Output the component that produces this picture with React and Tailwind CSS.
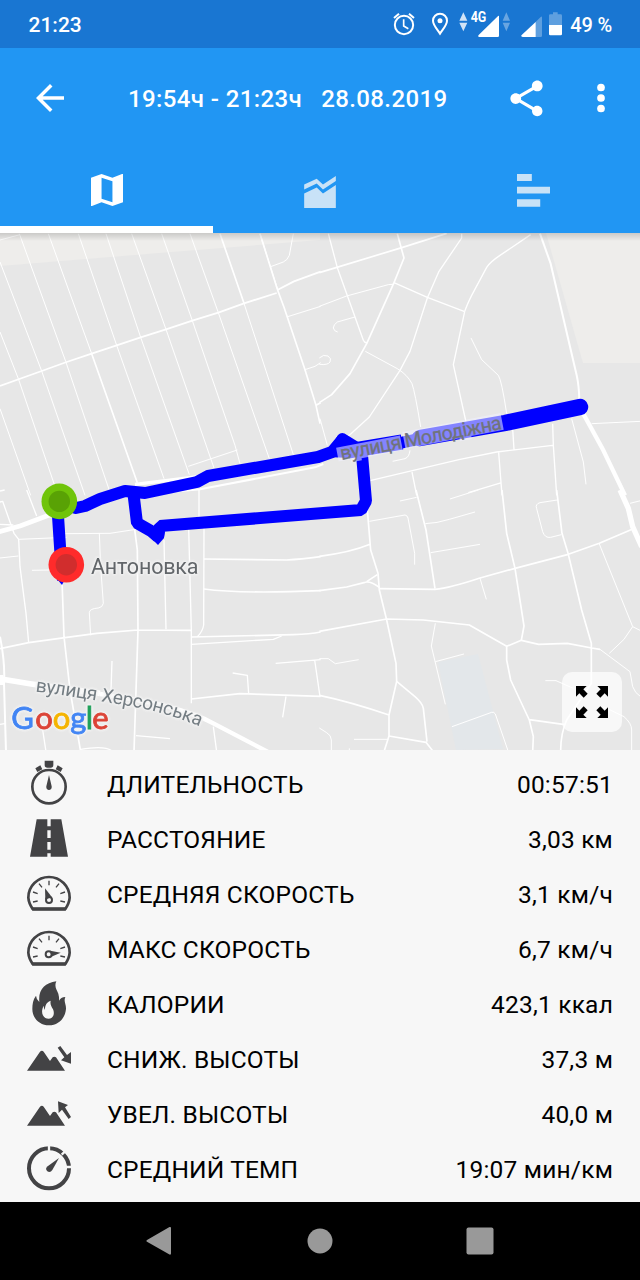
import React from "react";

const DARK = "#434345";

const roadsNorthWest = [
  [5.5, "M0 462L125 417L200 390L275 365L350 340L422 316L498 292L577 266L655 242L732 214L830 183M832 174L882 148L962 119"],
  [5, "M660 5L732 214M275 365L412 752M780 5L832 172"],
  [5, "M832 172L852 226L915 413L948 520L960 575"],
  [3, "M0 300L55 440L174 790M0 90L125 417L255 790M58 5L197 388L333 790"],
  [3, "M145 5L275 365M235 5L350 340L492 740M318 5L422 316L568 728M395 5L498 292L642 708"],
  [3, "M485 5L577 266L705 640L720 695M570 5L655 242L808 680M732 214L880 668M780 5L833 172"],
  [3, "M0 530L92 790M0 24L60 8M880 5L868 70Q862 85 850 90L812 104M863 254L962 223M915 413L945 403L962 392M565 703L712 654"],
  [5, "M948 520L962 512"],
  [10, "M405 757L600 733"],
  [6, "M400 790L600 772L945 706L970 696"],
];

const roadsNorthEast = [
  [5, "M-2 122L48 107L248 46L380 4M232 5L252 78L222 152L140 335L90 425L35 488L-2 512"],
  [4, "M25 5L52 107L130 325Q134 334 142 332M425 5V18L357 118L322 198L270 358L240 415L148 555L92 606L60 630"],
  [4, "M222 152L322 196L434 239M434 239L400 398L438 570"],
  [3, "M-2 223L80 192L190 162Q205 156 222 157M105 255L52 270Q40 278 40 288Q42 298 53 300M136 358L232 410Q262 428 276 455Q285 480 302 585"],
  [3, "M-2 378Q10 366 24 372Q36 380 30 390Q24 400 -2 397"],
  [4, "M632 8L540 70Q510 90 500 106L455 190Q440 220 434 239"],
  [3, "M453 318L485 383L535 430Q545 445 560 545"],
  [6, "M660 5L692 95L770 430Q777 460 778 505"],
  [13, "M790 545L850 655L915 790"],
  [3, "M815 575L962 568M755 560L790 690L798 757M0 560L22 640"],
  [4, "M150 746L420 682L530 660L698 640M578 590L582 652M698 575L700 640L710 790M536 662L546 790M276 720L290 790M445 782L545 752"],
  [3, "M218 688L255 680Q268 675 270 655"],
];

const roadsSouthWest = [
  [14, "M-5 126L60 108L140 78L200 60"],
  [4, "M0 3L14 0M0 36L8 34L42 130L56 148L60 230L78 370L86 458M80 0L110 78M0 103L40 105"],
  [3, "M56 148L200 142M190 131L330 130L408 118M0 204L55 198M96 241L150 240"],
  [3, "M298 130L302 230L310 340Q308 352 295 354Q268 356 268 368L272 436"],
  [5, "M186 270L192 440L210 600L242 785M404 118L412 180L414 420L402 785M0 476L86 458L195 443L290 430L414 420L574 421"],
  [4, "M492 150L498 418M566 115L574 421L574 640M597 0V80M612 115L611 405Q608 425 592 440"],
  [5, "M574 441L880 434Q930 432 962 426M574 627L720 611L962 619M612 207L860 210Q900 208 962 200M612 297Q720 312 962 302"],
  [4, "M574 463L820 448L845 438M827 520L962 509M698 549L742 556L746 611M858 619L848 682M944 510L960 620"],
  [6, "M0 440Q16 520 12 580L18 785"],
  [4, "M336 513L333 600M125 700L138 785M18 700L0 703M242 778Q320 765 338 785M408 737L510 746M640 710L650 785"],
  [17, "M-5 566L40 573Q90 582 150 590L300 610"],
  [13, "M300 612Q540 645 640 700L812 790"],
  [30, "M0 570H10"],
];

const roadsSouthEast = [
  [5, "M-2 199Q90 188 150 163M142 60L152 180L174 250L178 300L200 390L228 520L230 574L207 675V738L192 785"],
  [5, "M-2 302L80 291L135 277Q150 272 178 292M140 275L172 254M178 296L345 298Q390 294 480 264L585 235L745 193L838 160L940 116"],
  [5, "M-2 424L200 387L310 390L448 405L560 469L604 451L656 463L742 460L815 474L840 478"],
  [5, "M288 0L318 120L345 296M546 0L560 130L585 235L612 408L604 451M710 0L726 130L745 193L785 360L814 460V580L740 690Q722 730 722 785"],
  [5, "M560 469V510L572 570L628 690L640 740L638 785M628 689L735 704"],
  [5, "M230 574L285 620Q308 640 310 655L321 755M207 738L318 757L340 785M-2 616Q90 635 207 675"],
  [3, "M840 478L930 545L938 590Q945 610 962 620M838 162L938 410L912 448L868 490M938 410L962 422M850 650L912 680Q935 700 935 720V785M676 572H708L760 595"],
  [3, "M240 33L290 22M390 27L475 0M316 101Q350 100 388 88L465 66M332 188L480 163M148 94L255 75Q262 76 264 84L284 190V224"],
  [3, "M712 30L660 38Q645 42 650 56L668 125Q675 145 692 142L724 134M480 265L499 328M930 40L962 32"],
  [3, "M346 400L334 468L376 643M346 515L432 492M-2 506H25L46 521L116 509M396 710L515 667Q522 665 526 672L565 785M102 748H205M-2 714L20 728Q34 736 34 750V785M88 775V785"],
  [16, "M900 0L925 55L938 110L965 170"],
];

function Roads({ x, y, roads }) {
  return (
    <g transform={`translate(${x} ${y}) scale(0.33333)`} fill="none" stroke="#fff" strokeLinejoin="round">
      {roads.map(([w, d], i) => (
        <path key={i} d={d} strokeWidth={w} />
      ))}
    </g>
  );
}

const HALO = "[filter:drop-shadow(0_0_1px_#f2f2f2)_drop-shadow(0_0_1px_#f2f2f2)_drop-shadow(0_0_1px_#f2f2f2)]";

function GoogleLogo() {
  return (
    <g className={HALO}>
      <text y="729" fontSize="31" strokeWidth="0.8" className="font-['Lato']">
        <tspan x="11.300" fill="#4285f4" stroke="#4285f4">G</tspan>
        <tspan x="35.300" fill="#dc4437" stroke="#dc4437">o</tspan>
        <tspan x="52.700" fill="#f5b400" stroke="#f5b400">o</tspan>
        <tspan x="70.300" fill="#4285f4" stroke="#4285f4">g</tspan>
        <tspan x="85.700" fill="#1fa05a" stroke="#1fa05a">l</tspan>
        <tspan x="92.300" fill="#dc4437" stroke="#dc4437">e</tspan>
      </text>
    </g>
  );
}

function MapView() {
  return (
    <div className="relative h-[517px] w-full overflow-hidden bg-[#e7e7e7]">
      <svg viewBox="0 233 640 517" className="block h-[517px] w-[640px] font-['Roboto',sans-serif]">
        <path d="M0 233H320V240L147 254L0 266Z" fill="#eeedeb" />
        <path d="M546 233H640V363H583Z" fill="#eeedeb" />
        <path d="M438 662L478 654L503 749L456 750Z" fill="#e3e7ea" />
        <Roads x={0} y={232} roads={roadsNorthWest} />
        <Roads x={320} y={232} roads={roadsNorthEast} />
        <Roads x={0} y={490} roads={roadsSouthWest} />
        <Roads x={320} y={490} roads={roadsSouthEast} />
        <g fill="none" stroke="#0000ff" strokeLinejoin="round" strokeWidth="12">
          <path d="M66 505L76 508L85 506L100 499L125 491L145 493L197 482L208 476L318 457L332 452L342 440L353 449" />
          <path d="M59 503L58 516L61 562L63 580" />
          <path d="M133 490L137 523L151 531L158 537L160 526L361 510L366 501L362 455" strokeLinejoin="bevel" />
          <path d="M348 451L402 442" strokeWidth="15" />
          <path d="M400 443L421 438.500" strokeWidth="12" />
          <path d="M420 438L505 423L580 407" strokeLinecap="round" strokeWidth="16.500" />
        </g>
        <path d="M325 457L331 447L338 435Q342 431 347 435L360 443L352 458Z" fill="#00f" />
        <path d="M151 527H165L164 538L158 545L151 538Z" fill="#00f" />
        <path d="M57 579H65L62 585Z" fill="#00f" />
        <circle cx="59.300" cy="501.400" r="17.800" fill="#70c40a" />
        <circle cx="59.300" cy="501.400" r="10.700" fill="#59a205" />
        <circle cx="66.300" cy="564.700" r="17.800" fill="#ff2b2b" />
        <circle cx="66.300" cy="564.700" r="10.700" fill="#d12d2d" />
        <g transform="translate(341.500 460) rotate(-10.900)">
          <path d="M-3 -13H62V2H20V4H9V1H-3ZM65 -16H165V1H132V4H120V1H65Z" fill="#f0f0ff" fillOpacity="0.55" />
          <text fontSize="19.500" textLength="164" fill="#70747a" stroke="#70747a" strokeWidth="0.3">вулиця Молодіжна</text>
        </g>
        <text x="91" y="573.500" fontSize="21.500" textLength="107.500" fill="#62666a" className={HALO}>
          Антоновка
        </text>
        <path id="khersonska" d="M35 691.500Q92 699 142 708.500Q178 716 215 733" fill="none" />
        <text fontSize="19" fill="#747d83" className={HALO}>
          <textPath href="#khersonska" textLength="169">вулиця Херсонська</textPath>
        </text>
        <GoogleLogo />
      </svg>
      <div className="absolute inset-x-0 top-0 h-2 bg-gradient-to-b from-black/15 to-transparent" />
      <button className="absolute top-[439px] left-[562px] flex size-[60px] items-center justify-center rounded-[10px] bg-white/70">
        <svg viewBox="768 588 96 96" className="size-8" fill="#000">
          <path d="M768 588H800L790 598L803 611L791 623L778 610L768 620Z" />
          <path d="M864 588V620L854 610L841 623L829 611L842 598L832 588Z" />
          <path d="M768 684V652L778 662L791 649L803 661L790 674L800 684Z" />
          <path d="M864 684H832L842 674L829 661L841 649L854 662L864 652Z" />
        </svg>
      </button>
    </div>
  );
}

function StatusBar() {
  return (
    <div className="flex h-12 items-center bg-[#1976d2] pr-[28px] pl-[28.5px] text-[21px] font-medium text-white">
      <span className="pt-[3px]">21:23</span>
      <div className="ml-auto flex items-center">
        <svg viewBox="34 33 72 78" className="h-[26px] w-6" fill="none" stroke="#fff">
          <circle cx="70" cy="75" r="27.500" strokeWidth="6" />
          <path d="M69 58V78L83 86" strokeWidth="5" />
          <path d="M40 54L55 41M100 54L85 41" strokeWidth="6" />
        </svg>
        <svg viewBox="153 33 54 78" className="ml-[15px] h-[26px] w-[18px]" fill="none" stroke="#fff" strokeWidth="6">
          <path d="M180 101C174 91 159 75 159 62A21 21 0 0 1 201 62C201 75 186 91 180 101Z" />
          <circle cx="180" cy="62" r="7.500" fill="#fff" stroke="none" />
        </svg>
        <svg viewBox="237 33 156 78" className="ml-2.5 h-[26px] w-[52px] overflow-visible" fill="#fff">
          <path d="M238 62L250 37L262 62ZM238 68H262L250 94Z" fillOpacity="0.8" />
          <text x="272" y="67" fontSize="43" fontWeight="700" textLength="47" lengthAdjust="spacingAndGlyphs">4G</text>
          <path d="M357 48V107Q357 111 353 111H298Q292 110 296 105L352 50Q356 46 357 48Z" />
          <path d="M368 62L379 37L390 62ZM368 68H390L379 94Z" fillOpacity="0.35" />
        </svg>
        <svg viewBox="423 33 63 78" className="ml-2.5 h-[26px] w-[21px]" fill="#fff">
          <path d="M486 52V107Q486 111 482 111H466V67L482 51Q486 48 486 52Z" fillOpacity="0.3" />
          <path d="M467 66V111H428Q421 110 425 105Z" />
        </svg>
        <svg viewBox="507 33 39 78" className="ml-[7px] h-[26px] w-[13px]" fill="#fff">
          <path d="M507 76V46Q507 43 511 43H519V37H533V43H542Q546 43 546 47V76Z" fillOpacity="0.3" />
          <path d="M507 75H546V102Q546 106 542 106H511Q507 106 507 102Z" />
        </svg>
        <span className="ml-2 pt-[2px] text-[20px] tracking-[-0.2px] whitespace-pre">49 %</span>
      </div>
    </div>
  );
}

function Header() {
  return (
    <header className="flex h-[185px] flex-col bg-[#2196f3] text-white">
      <div className="flex h-[100px] items-center pl-[29px]">
        <svg viewBox="0 0 24 24" className="size-[42px]" fill="#fff">
          <path d="M20 11H7.830l5.590-5.590L12 4l-8 8 8 8 1.410-1.410L7.830 13H20v-2z" />
        </svg>
        <h1 className="ml-[57px] pt-[2px] text-[24px] font-medium tracking-[0.39px] whitespace-pre">19:54ч - 21:23ч   28.08.2019</h1>
        <div className="mr-[18px] ml-auto flex items-center">
          <svg viewBox="0 0 24 24" className="size-[43px]" fill="#fff">
            <path d="M18 16.080c-.76 0-1.440.3-1.960.77L8.910 12.700c.05-.23.09-.46.09-.7s-.04-.47-.09-.7l7.050-4.110c.54.5 1.250.81 2.040.81 1.660 0 3-1.340 3-3s-1.340-3-3-3-3 1.340-3 3c0 .24.04.47.09.7L8.040 9.810C7.500 9.310 6.790 9 6 9c-1.660 0-3 1.340-3 3s1.340 3 3 3c.79 0 1.500-.31 2.040-.81l7.120 4.160c-.05.21-.08.43-.08.65 0 1.610 1.310 2.920 2.920 2.920s2.920-1.310 2.920-2.920-1.310-2.920-2.920-2.920z" />
          </svg>
          <svg viewBox="0 0 24 24" className="ml-8 size-[42px]" fill="#fff">
            <circle cx="12" cy="6" r="2.200" />
            <circle cx="12" cy="12" r="2.200" />
            <circle cx="12" cy="18" r="2.200" />
          </svg>
        </div>
      </div>
      <div className="grid flex-1 grid-cols-3">
        <div className="flex justify-center border-b-[7px] border-white pt-[26px]">
          <svg viewBox="272 522 97 97" className="size-8" fill="#fff" fillRule="evenodd">
            <path d="M272 533L304 522L337 533L366 522H369V608L337 619L304 608L275 619H272ZM304 533V597L337 608V544Z" />
          </svg>
        </div>
        <div className="flex justify-center pt-[28px]">
          <svg viewBox="72 139 96 97" className="size-8" fill="#c8e2f7">
            <path d="M72 165L110 147L129 165L168 139V154L129 180L110 162L72 180Z" />
            <path d="M72 192L110 174L129 192L168 166V236H72Z" />
          </svg>
        </div>
        <div className="flex justify-center pt-[26px]">
          <svg viewBox="711 132 98 98" className="size-[33px]" fill="#c8e2f7">
            <path d="M711 132H755V153H711ZM711 170H809V190H711ZM711 207H780V229H711Z" />
          </svg>
        </div>
      </div>
    </header>
  );
}

function Gauge({ children }) {
  return (
    <g transform="translate(0 34)">
      <path d="M98 114Q86 96 85 80A62 62 0 0 1 209 80Q208 96 196 114Z" fill="none" stroke={DARK} strokeWidth="8" strokeLinejoin="round" />
      <path d="M93 109H201L197 119H97Z" fill={DARK} />
      <path d="M147 29V43M117 38L126 49M177 38L168 49M99 63L113 68M195 63L181 68M99 93L113 90M195 93L181 90" stroke={DARK} strokeWidth="4" />
      {children}
    </g>
  );
}

const icons = {
  duration: (
    <g>
      <circle cx="147" cy="111" r="50" fill="none" stroke={DARK} strokeWidth="8" />
      <path d="M134 33H160V46Q160 54 152 54H142Q134 54 134 46ZM106 56L121 47L127 59L112 67ZM188 56L173 47L167 59L182 67ZM147 76L155 110Q156 120 147 121Q138 120 139 110Z" fill={DARK} />
    </g>
  ),
  distance: (
    <path transform="translate(0 -165)" fill={DARK} fillRule="evenodd" d="M110 209H184L204 321H90ZM142 209V230H152V209ZM142 242V265H152V242ZM142 277V300H152V277ZM142 311V321H152V311Z" />
  ),
  average: (
    <Gauge>
      <circle cx="147" cy="87" r="9" fill="none" stroke={DARK} strokeWidth="6" />
      <path d="M135 52L156 79L136 85Z" fill={DARK} />
    </Gauge>
  ),
  max: (
    <Gauge>
      <circle cx="146" cy="85" r="9" fill="none" stroke={DARK} strokeWidth="6" />
      <path d="M182 80L151 74L154 92Z" fill={DARK} />
    </Gauge>
  ),
  calories: (
    <path fill={DARK} fillRule="evenodd" d="M169 35C162 50 170 60 175 72Q178 84 177 93Q182 83 196 82C190 96 199 102 198 118C195 148 174 167 147 167C120 167 97 147 97 118C97 103 99 90 108 78Q109 90 118 97C114 60 134 40 169 35ZM152 93C137 99 135 109 135 121Q131 116 131 108C122 124 125 147 146 147C160 147 165 132 159 119C153 109 150 102 152 93Z" />
  ),
  down: (
    <g transform="translate(0 -165)" fill={DARK}>
      <path d="M81 303L120 246Q126 240 131 246L150 274L158 263Q163 259 168 263L195 303Z" />
      <path d="M173 234L181 229L201 256L213 247V282L183 272L193 263Z" />
    </g>
  ),
  up: (
    <g transform="translate(0 -330)" fill={DARK}>
      <path d="M81 468L120 411Q126 405 131 411L150 439L158 428Q163 424 168 428L195 468Z" />
      <path d="M174 395L204 406L195 413L213 442L206 448L186 420L176 430Z" />
    </g>
  ),
  pace: (
    <g transform="translate(0 -496)">
      <circle cx="147" cy="597" r="60" fill="none" stroke={DARK} strokeWidth="12" />
      <path d="M147 550V528M185 556L201 541M194 593H216" stroke="#f7f7f7" strokeWidth="7" />
      <path d="M177 566L157 602Q151 611 142 606Q134 598 143 591Z" fill={DARK} />
    </g>
  ),
};

const stats = [
  ["duration", "ДЛИТЕЛЬНОСТЬ", "00:57:51"],
  ["distance", "РАССТОЯНИЕ", "3,03 км"],
  ["average", "СРЕДНЯЯ СКОРОСТЬ", "3,1 км/ч"],
  ["max", "МАКС СКОРОСТЬ", "6,7 км/ч"],
  ["calories", "КАЛОРИИ", "423,1 ккал"],
  ["down", "СНИЖ. ВЫСОТЫ", "37,3 м"],
  ["up", "УВЕЛ. ВЫСОТЫ", "40,0 м"],
  ["pace", "СРЕДНИЙ ТЕМП", "19:07 мин/км"],
];

export default function App() {
  return (
    <div className="flex h-[1280px] w-[640px] flex-col overflow-hidden bg-[#f7f7f7] font-['Roboto',sans-serif]">
      <StatusBar />
      <Header />
      <MapView />
      <ul className="h-[452px] pt-[6px] pr-[27px] pl-[27px] text-[24.5px] leading-[28px] text-black">
        {stats.map(([icon, label, value]) => (
          <li key={icon} className="flex h-[55px] items-center">
            <svg viewBox="81 34 132 132" className="mb-px size-11 overflow-visible">{icons[icon]}</svg>
            <span className="ml-9 pt-[3px] tracking-[0.17px]">{label}</span>
            <span className="ml-auto pt-[3px] tracking-[0.2px]">{value}</span>
          </li>
        ))}
      </ul>
      <nav className="h-[78px] bg-black">
        <svg viewBox="0 1202 640 78" className="block h-[78px] w-[640px]" fill="#999">
          <path d="M147 1240L169.500 1227Q171 1226.500 171 1228V1253.500Q171 1255 169.500 1254.500L147 1241.700Q145.500 1241 147 1240Z" />
          <circle cx="320" cy="1241" r="12.500" />
          <rect x="466.500" y="1227.500" width="27" height="27" rx="2" />
        </svg>
      </nav>
    </div>
  );
}
